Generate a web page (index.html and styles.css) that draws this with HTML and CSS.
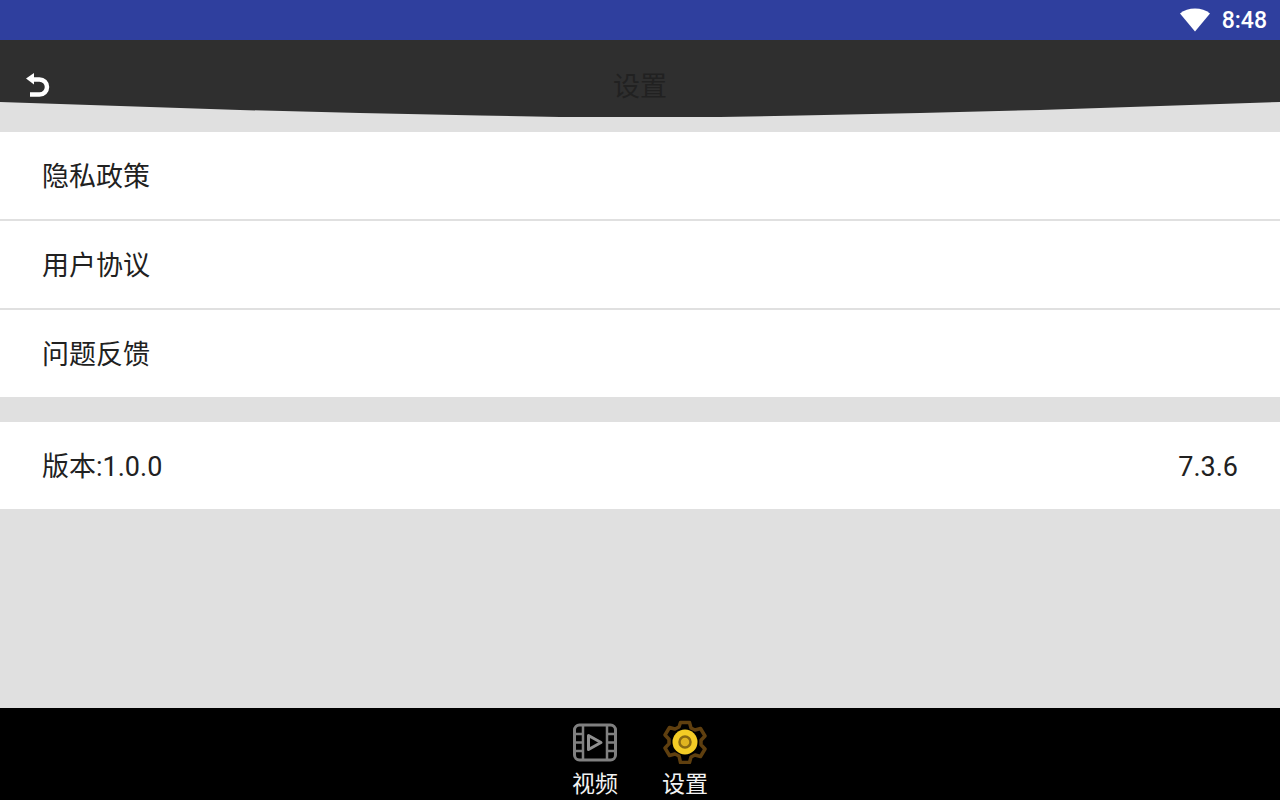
FILE: index.html
```html
<!DOCTYPE html>
<html lang="zh-CN">
<head>
    <meta charset="UTF-8">
    <meta name="viewport" content="width=device-width, initial-scale=1.0">
    <title>设置</title>
    <link rel="stylesheet" href="styles.css">
</head>
<body>
    <div class="status-bar">
        <svg class="wifi-icon" width="30" height="24" viewBox="0 0 30 24">
            <path d="M0 5.500C4 2.200 9.200 0.500 15 0.500s11 1.700 15 5L15 23.500z" fill="#fff"/>
        </svg>
        <span class="clock">8:48</span>
    </div>

    <div class="header">
        <svg class="back-icon" width="26" height="26" viewBox="0 0 26 26">
            <path d="M10 1L2 6.500 10 12.500z" fill="#fff"/>
            <path d="M9 7.500h6.500a7.500 7.500 0 0 1 0 15H6" fill="none" stroke="#fff" stroke-width="4.500"/>
        </svg>
        <div class="header-title">设置</div>
    </div>

    <div class="list">
        <div class="row">隐私政策</div>
        <div class="row">用户协议</div>
        <div class="row">问题反馈</div>
    </div>

    <div class="row version-row">
        <span>版本:1.0.0</span>
        <span>7.3.6</span>
    </div>

    <div class="spacer"></div>

    <div class="tab-bar">
        <div class="tab">
            <svg width="46" height="44" viewBox="0 0 46 44" fill="none" stroke="#808080" stroke-width="3">
                <rect x="2.500" y="5" width="41" height="35" rx="5"/>
                <path d="M11 5v35M35 5v35" stroke-width="2.500"/>
                <path d="M3 14h8M3 22.500h8M3 31h8M35 14h8M35 22.500h8M35 31h8" stroke-width="2.500"/>
                <path d="M16.500 15.500L29 22.500 16.500 29.500z" stroke="#909090" stroke-width="3" stroke-linejoin="round"/>
            </svg>
            <span>视频</span>
        </div>
        <div class="tab">
            <svg width="46" height="44" viewBox="0 0 46 44">
                <path d="M18.500 2.500h9l1.500 5.500 4 2 5.500-1.500 4.500 7.500-4 4.200v4.600l4 4.200-4.500 7.500-5.500-1.500-4 2-1.500 5.500h-9L17 36l-4-2-5.500 1.500L3 28l4-4.200v-4.600L3 15l4.500-7.500L13 9l4-2z" fill="none" stroke="#5f3f0f" stroke-width="3.500" stroke-linejoin="round"/>
                <circle cx="23" cy="22" r="12.500" fill="#f4cc25"/>
                <circle cx="23" cy="22" r="5.500" fill="#e0b420" stroke="#8a6a12" stroke-width="2.500"/>
            </svg>
            <span>设置</span>
        </div>
    </div>
</body>
</html>
```

FILE: styles.css
```css
html, body {
    height: 100%;
}
body {
    margin: 0;
    height: 800px;
    overflow: hidden;
    display: flex;
    flex-direction: column;
    background-color: #e0e0e0;
    color: #212121;
    font-family: Roboto, "Noto Sans CJK SC", sans-serif;
    font-size: 27px;
}
.status-bar {
    height: 40px;
    flex: none;
    display: flex;
    align-items: center;
    justify-content: flex-end;
    padding-right: 13px;
    background-color: #2f3f9e;
    color: #fff;
}
.wifi-icon {
    margin-right: 12px;
}
.clock {
    font-size: 23px;
    font-weight: 500;
}
.header {
    height: 77px;
    flex: none;
    margin-bottom: 15px;
    position: relative;
    display: flex;
    align-items: center;
    justify-content: center;
    padding-top: 17px;
    box-sizing: border-box;
    background-color: #2f2f2f;
    clip-path: polygon(0 62px, 120px 66px, 240px 70px, 360px 73px, 480px 75.500px, 560px 77px, 720px 77px, 800px 75.500px, 920px 73px, 1040px 70px, 1160px 66px, 1280px 62px, 1280px 0, 0 0);
}
.back-icon {
    position: absolute;
    left: 24px;
    top: 32px;
}
.header-title {
    color: #212121;
    font-size: 27px;
    line-height: 32px;
}
.list {
    flex: none;
    display: flex;
    flex-direction: column;
    gap: 2px;
    margin-bottom: 25px;
}
.row {
    height: 87px;
    flex: none;
    box-sizing: border-box;
    display: flex;
    align-items: center;
    justify-content: space-between;
    padding: 2px 42px 0;
    line-height: 32px;
    background-color: #fff;
}
.spacer {
    flex: 1;
}
.tab-bar {
    height: 92px;
    flex: none;
    display: flex;
    justify-content: center;
    gap: 44px;
    background-color: #000;
}
.tab {
    width: 46px;
    display: flex;
    flex-direction: column;
    align-items: center;
    color: #f2f2f2;
    font-size: 23px;
    line-height: 30px;
}
.tab svg {
    margin-top: 12px;
    flex: none;
}
.tab span {
    margin-top: 6px;
    white-space: nowrap;
}
```
